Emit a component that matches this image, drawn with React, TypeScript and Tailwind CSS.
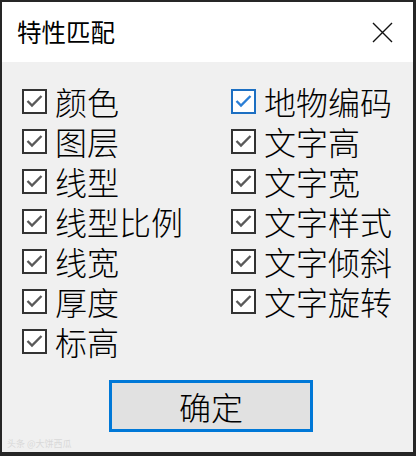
import React from "react";

const left = ["颜色", "图层", "线型", "线型比例", "线宽", "厚度", "标高"];
const right = ["地物编码", "文字高", "文字宽", "文字样式", "文字倾斜", "文字旋转"];

function Box({ blue }: { blue?: boolean }) {
  return (
    <div
      className={
        "w-[25px] h-[25px] shrink-0 border-2 bg-white flex items-center justify-center " +
        (blue ? "border-[#1c6fc2]" : "border-[#333333]")
      }
    >
      <svg width="21" height="21" viewBox="0 0 21 21">
        <path
          d="M3.5 10 L8 14.5 L17.5 5"
          fill="none"
          stroke={blue ? "#2b7fd6" : "#5a5a5a"}
          strokeWidth="2.4"
        />
      </svg>
    </div>
  );
}

function Item({ label, blue }: { label: string; blue?: boolean }) {
  return (
    <div className="h-[40px] flex items-center gap-[8px]">
      <Box blue={blue} />
      <span className="text-[32px] leading-[38px] font-light text-black whitespace-nowrap">{label}</span>
    </div>
  );
}

export default function App() {
  return (
    <div
      className="w-[416px] h-[456px] bg-[#262626] pt-[2px] pl-[2px] pr-[3px] pb-[4px] flex flex-col"
      style={{ fontFamily: '"Noto Sans CJK SC", "Noto Sans", sans-serif' }}
    >
      <div className="h-[60px] bg-white flex items-center justify-between pl-[15px] pr-[20px] shrink-0">
        <span className="text-[24.5px] leading-none text-black">特性匹配</span>
        <svg width="21" height="21" viewBox="0 0 21 21">
          <path d="M1 1 L20 20 M20 1 L1 20" stroke="#111" strokeWidth="1.4" fill="none" />
        </svg>
      </div>
      <div className="flex-1 bg-[#f0f0f0] flex flex-col relative">
        <div className="grid grid-cols-[209px_1fr] pl-[20px] mt-[19px]">
          <div className="flex flex-col">
            {left.map((l) => (
              <Item key={l} label={l} />
            ))}
          </div>
          <div className="flex flex-col">
            {right.map((l, i) => (
              <Item key={l} label={l} blue={i === 0} />
            ))}
          </div>
        </div>
        <div className="flex justify-center mt-[19px] pl-[7px]">
          <div className="w-[204px] h-[52px] border-[3px] border-[#0078d7] bg-[#e1e1e1] flex items-center justify-center">
            <span className="text-[32px] leading-[40px] font-light text-black">确定</span>
          </div>
        </div>
        <div className="absolute left-[5px] bottom-[4px] text-[9px] leading-none text-[#d9d9d9]">
          头条 @大饼西瓜
        </div>
      </div>
    </div>
  );
}
